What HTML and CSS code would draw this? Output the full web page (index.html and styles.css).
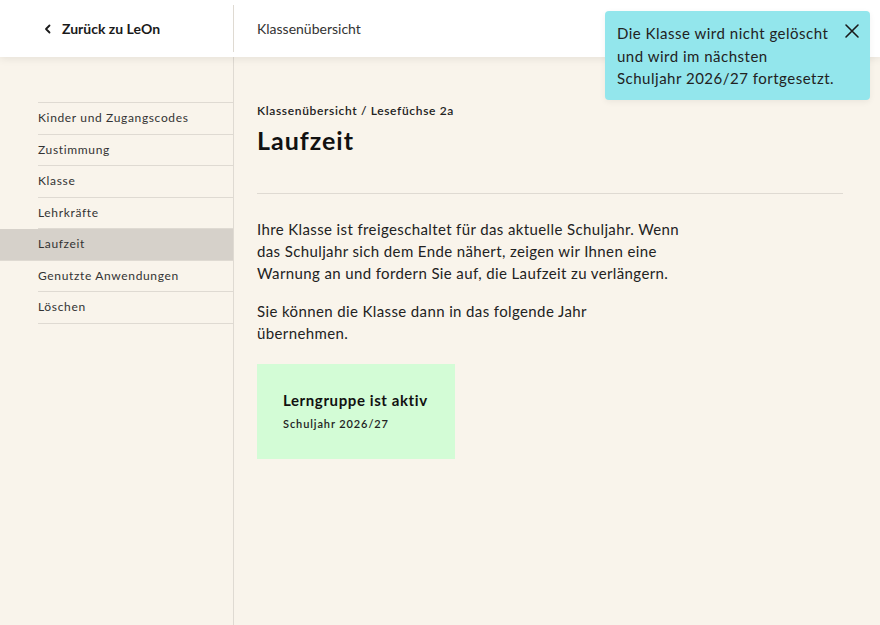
FILE: index.html
```html
<!DOCTYPE html>
<html lang="de">
<head>
  <meta charset="UTF-8">
  <title>Laufzeit - Klassenübersicht</title>
  <meta name="viewport" content="width=device-width, initial-scale=1.0">
  <link rel="stylesheet" href="styles.css">
</head>
<body>
  <header class="topbar">
    <div class="topbar-back">
      <a href="#" class="back-link">
        <svg width="10" height="10" viewBox="0 0 10 10" aria-hidden="true">
          <path d="M6.5 1.5 L3 5 L6.5 8.5" fill="none" stroke="#1a1a1a" stroke-width="1.8" stroke-linecap="round" stroke-linejoin="round"/>
        </svg>
        Zurück zu LeOn
      </a>
    </div>
    <div class="topbar-title">Klassenübersicht</div>
  </header>

  <div class="layout">
    <nav class="sidebar">
      <ul class="side-nav">
        <li><a href="#">Kinder und Zugangscodes</a></li>
        <li><a href="#">Zustimmung</a></li>
        <li><a href="#">Klasse</a></li>
        <li><a href="#">Lehrkräfte</a></li>
        <li class="active"><a href="#">Laufzeit</a></li>
        <li><a href="#">Genutzte Anwendungen</a></li>
        <li><a href="#">Löschen</a></li>
      </ul>
    </nav>

    <main class="content">
      <div class="breadcrumb">Klassenübersicht / Lesefüchse 2a</div>
      <h1>Laufzeit</h1>
      <hr class="divider">

      <p>Ihre Klasse ist freigeschaltet für das aktuelle Schuljahr. Wenn das Schuljahr sich dem Ende nähert, zeigen wir Ihnen eine Warnung an und fordern Sie auf, die Laufzeit zu verlängern.</p>
      <p class="short">Sie können die Klasse dann in das folgende Jahr übernehmen.</p>

      <div class="status-card">
        <div class="status-title">Lerngruppe ist aktiv</div>
        <div class="status-sub">Schuljahr 2026/27</div>
      </div>
    </main>
  </div>

  <!-- Toast -->
  <div class="toast">
    <p>Die Klasse wird nicht gelöscht und wird im nächsten Schuljahr 2026/27 fortgesetzt.</p>
    <button class="toast-close" aria-label="Schließen">
      <svg width="16" height="16" viewBox="0 0 16 16">
        <path d="M2 2 L14 14 M14 2 L2 14" stroke="#1a1a1a" stroke-width="1.6" stroke-linecap="round"/>
      </svg>
    </button>
  </div>
</body>
</html>
```

FILE: styles.css
```css
:root {
  --bg: #f9f4eb;
  --line: #dfdad2;
  --text: #222;
  --active: #d6d1ca;
  --toast: #93e6ec;
  --card: #d3fcd6;
}

* {
  box-sizing: border-box;
}

body {
  margin: 0;
  font-family: Lato, 'Noto Sans', sans-serif;
  background: var(--bg);
  color: var(--text);
  min-height: 625px;
}

.topbar {
  display: flex;
  height: 57px;
  background: #fff;
  box-shadow: 0 2px 8px rgba(0,0,0,0.08);
  position: relative;
  z-index: 1;
}

.topbar-back {
  width: 234px;
  display: flex;
  align-items: center;
  padding-left: 43px;
  margin: 5px 0;
  border-right: 1px solid var(--line);
}

.back-link {
  display: flex;
  align-items: center;
  gap: 9px;
  color: #1a1a1a;
  text-decoration: none;
  font-weight: 700;
  font-size: 14px;
}

.topbar-title {
  display: flex;
  align-items: center;
  padding-left: 23px;
  font-size: 14px;
  color: #333;
}

.layout {
  display: flex;
  min-height: 568px;
}

.sidebar {
  width: 234px;
  border-right: 1px solid var(--line);
  padding-top: 45px;
}

.side-nav {
  list-style: none;
  margin: 0;
  padding: 0;
  border-top: 1px solid var(--line);
  margin-left: 38px;
}

.side-nav li {
  border-bottom: 1px solid var(--line);
}

.side-nav a {
  display: block;
  height: 30.5px;
  line-height: 30px;
  font-size: 12px;
  color: #333;
  text-decoration: none;
  letter-spacing: 0.65px;
}

.side-nav li.active {
  background: var(--active);
  margin-left: -38px;
  padding-left: 38px;
}

.content {
  flex: 1;
  padding: 46px 37px 0 23px;
}

.breadcrumb {
  font-size: 12px;
  font-weight: 600;
  color: #222;
  letter-spacing: 0.65px;
}

h1 {
  margin: 7px 0 0;
  font-size: 25px;
  font-weight: 700;
  color: #111;
  letter-spacing: 1px;
}

.divider {
  border: none;
  border-top: 1px solid var(--line);
  margin: 38px 0 24px;
}

.content p {
  max-width: 432px;
  margin: 0 0 16px;
  font-size: 15px;
  line-height: 22px;
  color: #222;
  letter-spacing: 0.38px;
}

.content p.short {
  max-width: 360px;
}

.status-card {
  width: 198px;
  height: 95px;
  margin-top: 20px;
  background: var(--card);
  padding: 27px 26px;
}

.status-title {
  font-size: 15px;
  font-weight: 700;
  color: #111;
  letter-spacing: 0.6px;
}

.status-sub {
  margin-top: 8px;
  font-size: 11px;
  font-weight: 600;
  letter-spacing: 0.9px;
}

.toast {
  position: absolute;
  top: 11px;
  right: 10px;
  width: 265px;
  height: 89px;
  background: var(--toast);
  border-radius: 4px;
  display: flex;
  padding: 11px 10px 0 12px;
  box-shadow: 0 2px 6px rgba(0,0,0,0.06);
  z-index: 2;
}

.toast p {
  margin: 0;
  max-width: 218px;
  font-size: 15px;
  line-height: 22.5px;
  color: #222;
  letter-spacing: 0.5px;
  flex: 1;
}

.toast-close {
  align-self: flex-start;
  margin-left: auto;
  background: none;
  border: none;
  padding: 0;
  margin-top: 1px;
  cursor: pointer;
}
```
